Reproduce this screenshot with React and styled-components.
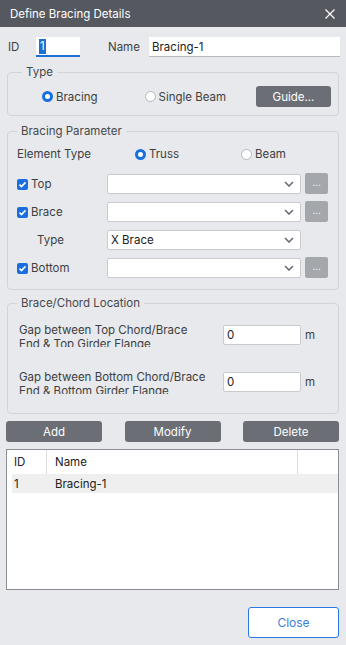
import React from 'react';
import styled, { createGlobalStyle } from 'styled-components';

const GlobalStyle = createGlobalStyle`
  html, body {
    margin: 0;
    padding: 0;
    background: #e8e9ec;
  }
  body {
    font-family: Inter, 'Noto Sans', sans-serif;
    font-size: 11.5px;
    color: #3d3f42;
  }
`;

const Window = styled.div`
  width: 346px;
  height: 645px;
  background: #e8e9ec;
  display: flex;
  flex-direction: column;
  overflow: hidden;
`;

const TitleBar = styled.div`
  height: 27px;
  flex: none;
  background: #55595f;
  color: #fff;
  display: flex;
  align-items: center;
  justify-content: space-between;
  padding: 0 11px 0 10px;
  font-size: 11.5px;
`;

const CloseX = styled.button`
  border: 0;
  background: none;
  padding: 0;
  display: flex;
  cursor: pointer;
`;

const Body = styled.div`
  flex: 1;
  display: flex;
  flex-direction: column;
  padding: 0 7px 0 6px;
`;

const IdRow = styled.div`
  display: flex;
  align-items: center;
  height: 20px;
  margin-top: 10px;
`;

const Label = styled.span`
  width: ${(p) => p.w || 'auto'};
  padding-left: ${(p) => p.pl || 0};
  flex: none;
  white-space: nowrap;
`;

const TextBox = styled.div`
  height: 20px;
  width: ${(p) => p.w};
  flex: none;
  box-sizing: border-box;
  background: #fff;
  display: flex;
  align-items: center;
  padding-left: 3px;
  border: ${(p) => (p.plain ? '0' : '1px solid #c9cbcf')};
  border-bottom: ${(p) => (p.focused ? '2px solid #1c6fd6' : p.plain ? '1px solid #b9bbbf' : '1px solid #c9cbcf')};
  border-radius: ${(p) => (p.plain ? '0' : '2px')};
  color: #222;
`;

const Selected = styled.span`
  background: #1d6fd3;
  color: #fff;
  padding: 0 1px;
  line-height: 15px;
`;

const Group = styled.fieldset`
  margin: ${(p) => p.mt} 0 0 1px;
  padding: ${(p) => p.pad};
  border: 1px solid #d2d4d8;
  border-radius: 4px;
  min-width: 0;
`;

const Legend = styled.legend`
  padding: 0 4px;
  margin-left: ${(p) => p.ml || '6px'};
  line-height: 14px;
  color: #46484b;
`;

const TypeRow = styled.div`
  display: flex;
  align-items: center;
  height: 21px;
`;

const Radio = styled.span`
  display: inline-flex;
  align-items: center;
  gap: 3px;
  margin-left: ${(p) => p.ml || 0};
  white-space: nowrap;

  &::before {
    content: '';
    box-sizing: border-box;
    width: 11px;
    height: 11px;
    border-radius: 50%;
    background: #fff;
    border: ${(p) => (p.checked ? '3px solid #1a6fe0' : '1px solid #b4b6ba')};
  }
`;

const DarkButton = styled.button`
  width: ${(p) => p.w || '96px'};
  height: 21px;
  border: 0;
  border-radius: 3px;
  background: #6b6f75;
  color: #fff;
  font: inherit;
  font-size: 11.5px;
  padding: 0;
  margin-left: ${(p) => p.ml || 0};
  flex: none;
`;

const ParamGrid = styled.div`
  display: grid;
  grid-template-columns: 86px 194px 23px;
  column-gap: 4px;
  row-gap: 8px;
`;

const ElementRow = styled.div`
  display: flex;
  align-items: center;
  height: 16px;
  margin-bottom: 12px;
`;

const CheckLabel = styled.span`
  display: flex;
  align-items: center;
  gap: 3px;
  padding-left: ${(p) => p.pl || 0};
  height: 20px;
`;

const Check = styled.span`
  width: 11px;
  height: 11px;
  border-radius: 2px;
  background: #1a6fe0;
  display: inline-flex;
  align-items: center;
  justify-content: center;
`;

const Select = styled.div`
  height: 20px;
  box-sizing: border-box;
  background: #fff;
  border: 1px solid #c9cbcf;
  border-radius: 2px;
  display: flex;
  align-items: center;
  justify-content: space-between;
  padding: 0 6px 0 3px;
  color: #222;
`;

const DotsButton = styled.button`
  width: 23px;
  height: 21px;
  margin-top: -1px;
  border: 0;
  border-radius: 2px;
  background: #a4a7ac;
  color: #fff;
  font: inherit;
  font-size: 10px;
  padding: 0 0 3px;
`;

const GapRow = styled.div`
  display: flex;
  align-items: center;
  gap: 4px;
  & + & {
    margin-top: 23px;
  }
`;

const GapLabel = styled.div`
  width: 200px;
  height: 24px;
  overflow: hidden;
  line-height: 14px;
  padding-left: 2px;
  flex: none;
`;

const ButtonRow = styled.div`
  display: flex;
  justify-content: space-between;
  margin-top: 7px;
`;

const List = styled.div`
  margin-top: 7px;
  height: 141px;
  box-sizing: border-box;
  background: #fff;
  border: 1px solid #8b8e93;
  padding: 0 0 0 5px;
`;

const ListRow = styled.div`
  display: grid;
  grid-template-columns: 35px 251px;
  height: ${(p) => (p.head ? '24px' : '19px')};
  background: ${(p) => (p.head ? '#fff' : '#efefef')};
  align-items: center;
  color: #222;
`;

const Cell = styled.span`
  padding-left: ${(p) => (p.first ? '2px' : '8px')};
  height: 100%;
  display: flex;
  align-items: center;
  border-right: ${(p) => (p.sep ? '1px solid #dcdcdc' : '0')};
  box-sizing: border-box;
`;

const Divider = styled.div`
  height: 1px;
  background: #c7c9cd;
  margin-top: 10px;
`;

const Footer = styled.div`
  display: flex;
  justify-content: flex-end;
  padding: 7px 7px 7px 0;
`;

const CloseButton = styled.button`
  width: 91px;
  height: 31px;
  background: #fff;
  border: 1px solid #2a78e4;
  border-radius: 3px;
  color: #3b7fe0;
  font: inherit;
  font-size: 12px;
`;

const Chevron = () => (
  <svg width="10" height="6" viewBox="0 0 10 6">
    <path d="M1 1l4 4 4-4" fill="none" stroke="#6a6c70" strokeWidth="1.6" />
  </svg>
);

const Tick = () => (
  <svg width="9" height="9" viewBox="0 0 9 9">
    <path d="M1.5 4.6l2 2 4-4.2" fill="none" stroke="#fff" strokeWidth="1.6" />
  </svg>
);

const ParamRow = ({ label, value, checked = true, dots = true, pl }) => (
  <>
    <CheckLabel pl={pl}>
      {checked && (
        <Check>
          <Tick />
        </Check>
      )}
      {label}
    </CheckLabel>
    <Select>
      <span>{value}</span>
      <Chevron />
    </Select>
    {dots ? <DotsButton>...</DotsButton> : <span />}
  </>
);

export default function App() {
  return (
    <Window>
      <GlobalStyle />
      <TitleBar>
        <span>Define Bracing Details</span>
        <CloseX aria-label="close">
          <svg width="10" height="10" viewBox="0 0 10 10">
            <path d="M0.5 0.5l9 9M9.5 0.5l-9 9" stroke="#fff" strokeWidth="1.2" />
          </svg>
        </CloseX>
      </TitleBar>

      <Body>
        <IdRow>
          <Label w="28px" pl="2px">ID</Label>
          <TextBox w="44px" plain focused>
            <Selected>1</Selected>
          </TextBox>
          <Label w="41px" pl="28px">Name</Label>
          <TextBox w="191px" plain>
            Bracing-1
          </TextBox>
        </IdRow>

        <Group mt="8px" pad="7px 7px 8px 8px">
          <Legend>Type</Legend>
          <TypeRow>
            <Radio checked ml="26px">Bracing</Radio>
            <Radio ml="47px">Single Beam</Radio>
            <DarkButton w="75px" ml="auto">Guide...</DarkButton>
          </TypeRow>
        </Group>

        <Group mt="8px" pad="8px 10px 11px 9px">
          <Legend ml="0px">Bracing Parameter</Legend>
          <ElementRow>
            <Label w="118px">Element Type</Label>
            <Radio checked>Truss</Radio>
            <Radio ml="62px">Beam</Radio>
          </ElementRow>
          <ParamGrid>
            <ParamRow label="Top" value="" />
            <ParamRow label="Brace" value="" />
            <ParamRow label="Type" value="X Brace" checked={false} dots={false} pl="20px" />
            <ParamRow label="Bottom" value="" />
          </ParamGrid>
        </Group>

        <Group mt="6px" pad="13px 10px 19px 9px">
          <Legend ml="0px">Brace/Chord Location</Legend>
          <GapRow>
            <GapLabel>
              Gap between Top Chord/Brace
              <br />
              End &amp; Top Girder Flange
            </GapLabel>
            <TextBox w="78px">0</TextBox>
            <span>m</span>
          </GapRow>
          <GapRow>
            <GapLabel>
              Gap between Bottom Chord/Brace
              <br />
              End &amp; Bottom Girder Flange
            </GapLabel>
            <TextBox w="78px">0</TextBox>
            <span>m</span>
          </GapRow>
        </Group>

        <ButtonRow>
          <DarkButton>Add</DarkButton>
          <DarkButton>Modify</DarkButton>
          <DarkButton>Delete</DarkButton>
        </ButtonRow>

        <List>
          <ListRow head>
            <Cell first sep>ID</Cell>
            <Cell sep>Name</Cell>
          </ListRow>
          <ListRow>
            <Cell first>1</Cell>
            <Cell>Bracing-1</Cell>
          </ListRow>
        </List>
      </Body>

      <Divider />
      <Footer>
        <CloseButton>Close</CloseButton>
      </Footer>
    </Window>
  );
}
